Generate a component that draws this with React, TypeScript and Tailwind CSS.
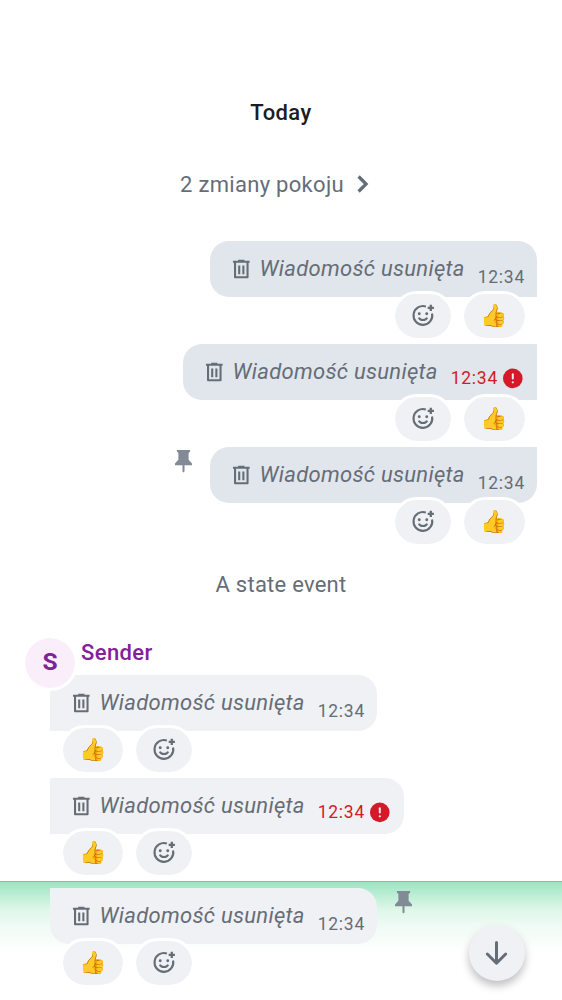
import type { ReactNode } from "react";

function TrashIcon() {
  return (
    <svg viewBox="0 0 24 24" className="-ml-[0.5px] h-[25px] w-[25px] shrink-0" fill="none" stroke="currentColor" strokeWidth="2">
      <path d="M5.8 5.6V19.4H17.8V5.6M3.8 4.6H19.8M8.8 3.6H14.8" strokeLinejoin="round" />
      <path d="M9.8 8.1V16.6M13.8 8.1V16.6" />
    </svg>
  );
}

function PinIcon() {
  return (
    <svg viewBox="0 0 25 25" className="h-[25px] w-[25px]" fill="currentColor">
      <path d="M5.9 1.9H19.1V3.4L17.6 5V11.7L21 15.4V17.2H13.5V23.4L12.5 24.4L11.5 23.4V17.2H4V15.4L7.4 11.7V5L5.9 3.4Z" />
    </svg>
  );
}

function AddReactionIcon() {
  return (
    <svg viewBox="0.5 0 24 24" className="h-[25px] w-[25px]" fill="none" stroke="currentColor" strokeWidth="2">
      <path d="M14.8 3.45A9 9 0 1 0 20.7 10" />
      <path d="M19.5 1.7V7.7M16.5 4.7H22.5" strokeWidth="2.2" />
      <path d="M8 14C9.2 17.1 14.8 17.1 16 14" />
      <circle cx="8.4" cy="10.3" r="1.4" fill="currentColor" stroke="none" />
      <circle cx="15.6" cy="10.3" r="1.4" fill="currentColor" stroke="none" />
    </svg>
  );
}

function ErrorIcon() {
  return (
    <svg viewBox="0 0 20 20" className="h-5 w-5 shrink-0 overflow-visible">
      <circle cx="9.8" cy="10.4" r="9.8" fill="#d51928" />
      <path d="M9.8 6.2V10.6" stroke="#e8ebf1" strokeWidth="2" strokeLinecap="round" />
      <circle cx="9.8" cy="14.3" r="1.1" fill="#e8ebf1" />
    </svg>
  );
}

function Pill({ wide, children }: { wide?: boolean; children: ReactNode }) {
  return (
    <div className={`box-content flex h-[43.5px] items-center justify-center rounded-[25px] border-[3px] border-white bg-[#f0f1f5] bg-clip-padding ${wide ? "w-[60.5px]" : "w-[56px]"}`}>
      {children}
    </div>
  );
}

function Message({ mine, failed, pinned, corners }: { mine?: boolean; failed?: boolean; pinned?: boolean; corners: string }) {
  const add = <Pill><AddReactionIcon /></Pill>;
  const thumb = <Pill wide><span className="pt-px font-['Noto_Color_Emoji',sans-serif] text-[22px] leading-none">👍</span></Pill>;
  return (
    <div className={`flex h-[103px] flex-col ${mine ? "items-end" : "items-start"}`}>
      <div className={`flex gap-[14px] ${mine ? "flex-row-reverse" : ""}`}>
        <div className={`flex h-14 items-center pl-[19px] ${failed ? "w-[354px] pr-[14px]" : "w-[327px] pr-3"} ${mine ? "bg-[#e1e6ec]" : "bg-[#f0f1f5]"} ${corners}`}>
          <TrashIcon />
          <span className="ml-[6px] whitespace-nowrap text-[22px] italic leading-8 tracking-[0.3px] text-[#656d77]">Wiadomość usunięta</span>
          <span className={`ml-auto flex items-center text-[17.5px] leading-6 tracking-[0.75px] ${failed ? "gap-[5px] pt-[12px] text-[#d51928]" : "pt-[16px] text-[#656d77]"}`}>
            12:34
            {failed && <ErrorIcon />}
          </span>
        </div>
        {pinned && <div className="pt-[1px] text-[#818a95]"><PinIcon /></div>}
      </div>
      <div className={`relative -mt-[6px] flex gap-[7px] ${mine ? "mr-[9.5px]" : "ml-[9.5px]"}`}>
        {mine ? <>{add}{thumb}</> : <>{thumb}{add}</>}
      </div>
    </div>
  );
}

export default function App() {
  return (
    <main className="relative flex h-[1000px] w-[562px] flex-col overflow-hidden bg-white font-[Roboto,sans-serif] text-[#656d77]">
      <h1 className="mt-[97px] text-center text-[22px] font-medium leading-8 tracking-[0.4px] text-[#1b1d22]">Today</h1>
      <div className="mt-[39px] flex h-8 items-center justify-center gap-[13px] pr-[13px] text-[22px] tracking-[0.3px]">
        <span>2 zmiany pokoju</span>
        <svg viewBox="0 0 12 18" className="h-[18px] w-3" fill="none" stroke="currentColor" strokeWidth="3.2">
          <path d="M1.6 1.5L9.1 9L1.6 16.5" />
        </svg>
      </div>
      <section className="mt-[41px] pr-[25px]">
        <Message mine corners="rounded-[19px] rounded-br-none" />
        <Message mine failed corners="rounded-l-[19px]" />
        <Message mine pinned corners="rounded-[19px] rounded-tr-none" />
      </section>
      <p className="mt-[19px] text-center text-[22px] leading-8 tracking-[0.25px]">A state event</p>
      <section className="mt-[33px]">
        <div className="relative z-10 -mb-4 flex h-[57px] pl-[22px]">
          <div className="mt-[0.5px] flex h-14 w-14 items-center justify-center rounded-full border-[3px] border-white bg-[#faeefb] bg-clip-padding text-[24.5px] font-bold text-[#822198]">S</div>
          <span className="ml-[3px] mt-[3px] text-[22px] font-medium leading-8 tracking-[0.4px] text-[#822198]">Sender</span>
        </div>
        <div className="pl-[50px]">
          <Message corners="rounded-[19px] rounded-bl-none" />
          <Message failed corners="rounded-r-[19px]" />
        </div>
        <div className="h-[119px] border-t border-[#62cea2] bg-[linear-gradient(to_bottom,#9be4c2_0px,#bceed5_13px,#dff7e9_28px,#f1fbf5_45px,#ffffff_72px)] pl-[50px] pt-[6px]">
          <Message pinned corners="rounded-[19px] rounded-tl-none" />
        </div>
      </section>
      <button className="absolute left-[469px] top-[925px] flex h-14 w-14 items-center justify-center rounded-full bg-[#f0f1f5] shadow-[0_5px_8px_rgba(0,0,0,0.25)]">
        <svg viewBox="0 0 24 26" className="h-[26px] w-6" fill="none" stroke="#656d77" strokeWidth="3" strokeLinecap="round" strokeLinejoin="round">
          <path d="M11.5 2.5V23M2.3 14L11.5 23.2L20.7 14" />
        </svg>
      </button>
    </main>
  );
}
